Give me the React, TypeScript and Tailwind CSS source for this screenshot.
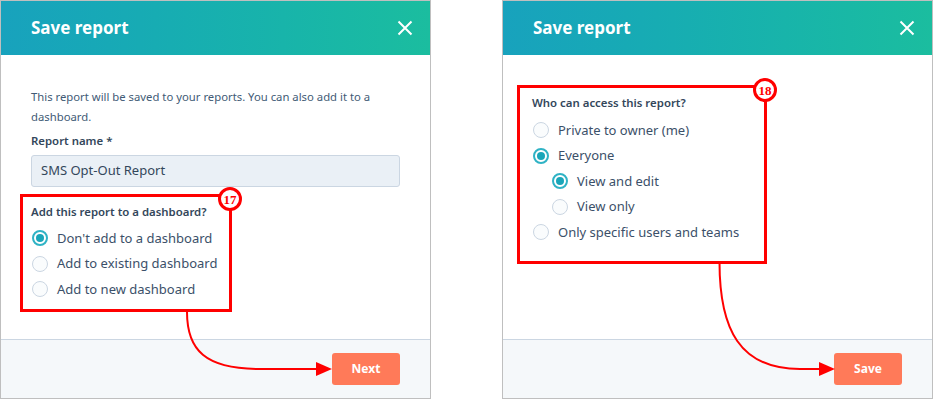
import React from "react";

const font = { fontFamily: '"Noto Sans", "Liberation Sans", sans-serif' };

function Radio({ checked, label, nested }: { checked?: boolean; label: string; nested?: boolean }) {
  return (
    <div className={`flex h-[25.5px] items-center gap-[9px] ${nested ? "pl-[20px]" : "pl-[1px]"}`}>
      {checked ? (
        <span className="flex h-[16px] w-[16px] items-center justify-center rounded-full border-2 border-[#2fb3c5] bg-white">
          <span className="h-[8px] w-[8px] rounded-full bg-[#1aa6b9]" />
        </span>
      ) : (
        <span className="h-[16px] w-[16px] rounded-full border border-[#cbd6e2] bg-[#fafcfd]" />
      )}
      <span className="text-[13px] text-[#3b5069]">{label}</span>
    </div>
  );
}

function Badge({ n }: { n: string }) {
  return (
    <div className="absolute right-[-13px] top-[-10px] flex h-[24px] w-[24px] items-center justify-center rounded-full border-[3px] border-[#ff0000] bg-white">
      <span className="text-[13px] font-bold leading-none text-[#ff0000]" style={{ fontFamily: '"Liberation Serif", serif' }}>
        {n}
      </span>
    </div>
  );
}

function Panel({ children, button }: { children: React.ReactNode; button: string }) {
  return (
    <div className="flex h-[399px] w-[431px] flex-col border border-[#bfbfbf] bg-white">
      <div className="flex h-[54px] shrink-0 items-center justify-between bg-gradient-to-r from-[#18a2bd] to-[#1bbd9f] pl-[30px] pr-[17px]">
        <span className="text-[17px] font-bold text-white">Save report</span>
        <svg width="16" height="16" viewBox="0 0 16 16">
          <path d="M1.5 1.5 14.5 14.5M14.5 1.5 1.5 14.5" stroke="white" strokeWidth="2" />
        </svg>
      </div>
      <div className="flex-1 px-[30px]">{children}</div>
      <div className="flex h-[59px] shrink-0 items-center justify-end border-t border-[#cbd6e2] bg-[#f5f8fa] pr-[30px]">
        <button className="h-[32px] w-[68px] rounded-[3px] bg-[#ff7a59] text-[12px] font-bold text-white">{button}</button>
      </div>
    </div>
  );
}

export default function App() {
  return (
    <div className="relative h-[399px] w-[933px] bg-white" style={font}>
      <div className="flex gap-[71px]">
        <Panel button="Next">
          <p className="pt-[32px] text-[11.3px] leading-[20px] text-[#425b76]">
            This report will be saved to your reports. You can also add it to a dashboard.
          </p>
          <div className="mt-[4px] text-[11.4px] font-semibold leading-[20px] text-[#33475b]">Report name *</div>
          <div className="mt-[4px] flex h-[32px] items-center rounded-[3px] border border-[#cbd6e2] bg-[#eaf0f6] pl-[9px] text-[13px] text-[#33475b]">
            SMS Opt-Out Report
          </div>
          <div className="relative -ml-[11px] mt-[7px] w-[212px] border-[3px] border-[#ff0000] pb-[7px] pl-[8px] pt-[5px]">
            <Badge n="17" />
            <div className="text-[11.4px] font-semibold leading-[20px] text-[#33475b]">Add this report to a dashboard?</div>
            <div className="mt-[3.5px]">
              <Radio checked label="Don't add to a dashboard" />
              <Radio label="Add to existing dashboard" />
              <Radio label="Add to new dashboard" />
            </div>
          </div>
        </Panel>
        <Panel button="Save">
          <div className="relative -ml-[16px] mt-[30px] w-[250px] border-[3px] border-[#ff0000] pb-[16px] pl-[12px] pt-[5px]">
            <Badge n="18" />
            <div className="text-[11.4px] font-semibold leading-[20px] text-[#33475b]">Who can access this report?</div>
            <div className="mt-[4.5px]">
              <Radio label="Private to owner (me)" />
              <Radio checked label="Everyone" />
              <Radio checked nested label="View and edit" />
              <Radio nested label="View only" />
              <Radio label="Only specific users and teams" />
            </div>
          </div>
        </Panel>
      </div>
      <svg className="pointer-events-none absolute left-0 top-0" width="933" height="399">
        <path d="M187 312 C187 350 205 369 260 369 L318 369" fill="none" stroke="#ff0000" strokeWidth="2" />
        <path d="M316 362 L332 369 L316 376 Z" fill="#ff0000" />
        <path d="M719.5 262 C719.5 330 740 369 800 369 L821 369" fill="none" stroke="#ff0000" strokeWidth="2" />
        <path d="M819 362 L835 369 L819 376 Z" fill="#ff0000" />
      </svg>
    </div>
  );
}
